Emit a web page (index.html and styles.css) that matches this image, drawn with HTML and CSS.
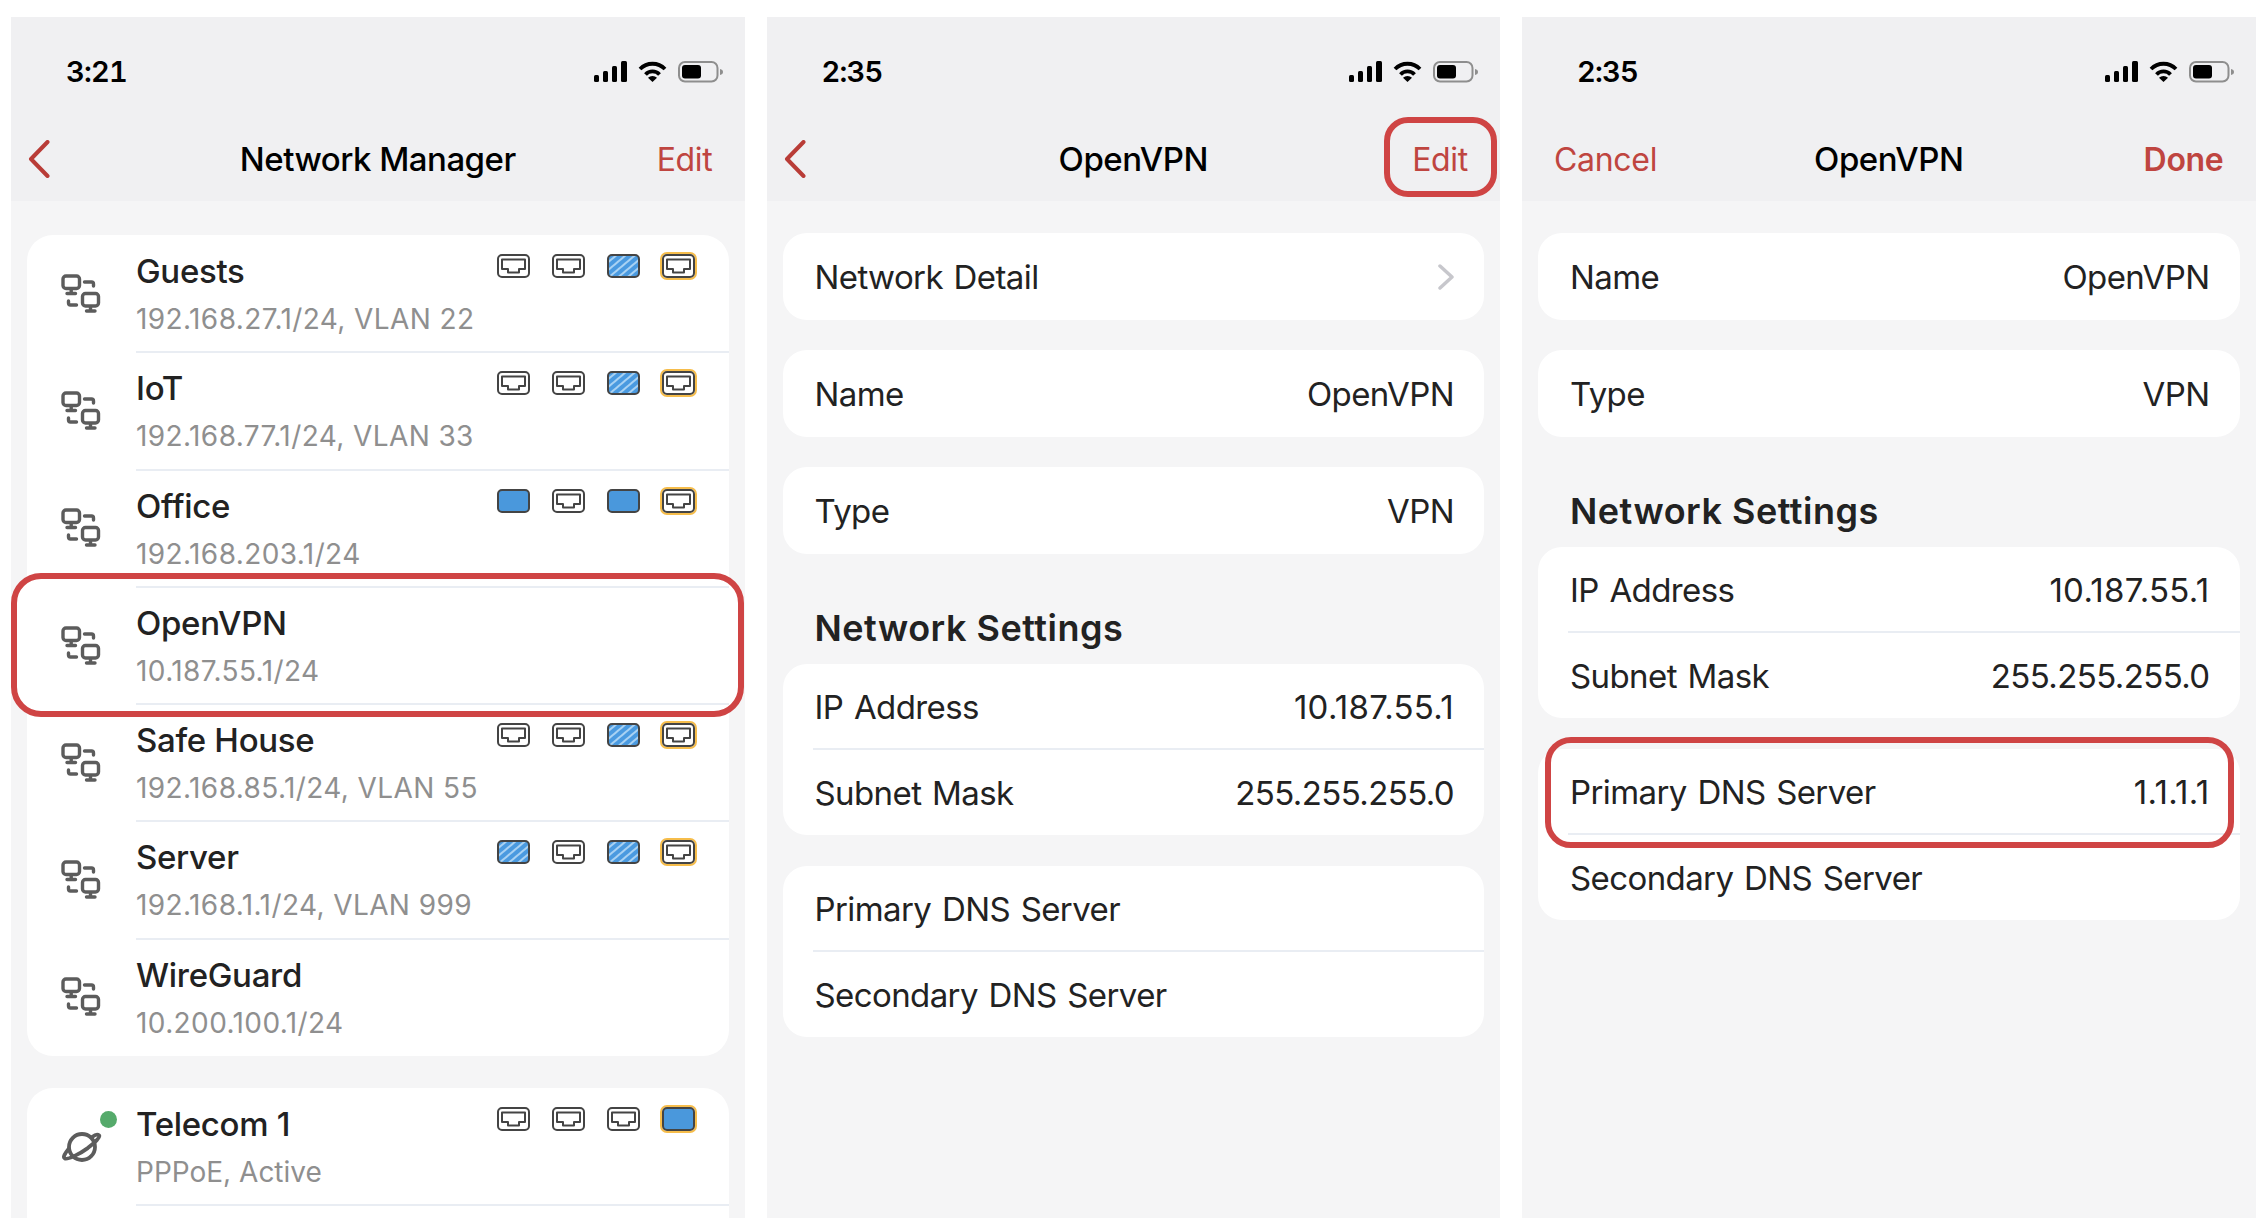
FILE: index.html
```html
<!DOCTYPE html>
<html lang="en">
<head>
<meta charset="utf-8">
<title>Network Manager</title>
<link rel="stylesheet" href="styles.css">
</head>
<body>
<svg class="defs" aria-hidden="true">
  <defs>
    <pattern id="hatch" width="6" height="6" patternUnits="userSpaceOnUse" patternTransform="rotate(-40)">
      <rect width="6" height="6" fill="#4a9ae0"/>
      <rect width="6" height="2" fill="#a9d2f3"/>
    </pattern>
    <g id="frame-plain">
      <rect x="1" y="1" width="31" height="22" rx="4" fill="#fff" stroke="#444" stroke-width="2"/>
      <path d="M5 5.5h23v9.5h-6v3.5h-11v-3.500h-6z" fill="#fff" stroke="#444" stroke-width="2" stroke-linejoin="round"/>
    </g>
    <g id="frame-hatch">
      <rect x="1" y="1" width="31" height="22" rx="4" fill="url(#hatch)" stroke="#444" stroke-width="2"/>
    </g>
    <g id="frame-solid">
      <rect x="1" y="1" width="31" height="22" rx="4" fill="#4a98dc" stroke="#444" stroke-width="2"/>
    </g>
    <rect id="ring" x="-1" y="-1" width="35" height="26" rx="6" fill="none" stroke="#f6bd4b" stroke-width="2"/>
    <g id="net" fill="none" stroke="#5c5c5c" stroke-width="3.400" stroke-linecap="round" stroke-linejoin="round">
      <rect x="2" y="2" width="16.500" height="12.500" rx="3"/>
      <path d="M10.200 15v4M6 19.500h8.500"/>
      <path d="M23.500 8h7q2 0 2 2v2"/>
      <path d="M7.500 27v2q0 2 2 2h6"/>
      <rect x="21.500" y="19.500" width="16" height="12.500" rx="3"/>
      <path d="M29.500 33v3.500M25.500 37h8.500"/>
    </g>
    <g id="planet" fill="none" stroke="#5c5c5c" stroke-width="3.800" stroke-linecap="round" stroke-linejoin="round">
      <circle cx="21" cy="16" r="13"/>
      <g transform="translate(21 16) rotate(-20)">
        <path d="M-13-3C-18 0-22 3-20 5C-18 7-5 6 5 3C14 0 21-3 20-5C19-7 16-7 13-6"/>
      </g>
    </g>
    <g id="signal" fill="#000">
      <rect x="0" y="14" width="5" height="7" rx="1.500"/>
      <rect x="9" y="10" width="5" height="11" rx="1.500"/>
      <rect x="18" y="5" width="5" height="16" rx="1.500"/>
      <rect x="27" y="0" width="6" height="21" rx="1.500"/>
    </g>
    <g id="wifi">
      <path d="M2 8A17.500 17.500 0 0 1 27 8M7.500 13.500A9.500 9.500 0 0 1 21.500 13.500" fill="none" stroke="#000" stroke-width="3.800"/>
      <path d="M14.500 21L10 16.800A6.500 6.500 0 0 1 19 16.800Z" fill="#000"/>
    </g>
    <g id="battery">
      <rect x="1" y="1" width="38.500" height="19.500" rx="6" fill="none" stroke="#8e8e8e" stroke-width="2"/>
      <rect x="4" y="4" width="19" height="13.500" rx="3" fill="#000"/>
      <path d="M42 8q3 .6 3 3t-3 3z" fill="#8e8e8e"/>
    </g>
  </defs>
</svg>

<main class="screens">

  <section class="phone">
    <div class="outline outline-row"></div>
    <header class="top">
      <div class="status">
        <span class="time">3:21</span>
        <div class="status-icons">
          <svg class="ic-signal"><use href="#signal"/></svg>
          <svg class="ic-wifi"><use href="#wifi"/></svg>
          <svg class="ic-battery"><use href="#battery"/></svg>
        </div>
      </div>
      <nav class="nav">
        <svg class="back" viewBox="0 0 22 38"><path d="M19.500 2L3 19l16.500 17"/></svg>
        <h1 class="title">Network Manager</h1>
        <a class="action">Edit</a>
      </nav>
    </header>

    <div class="list-card">
      <div class="net-row">
        <div class="net-icon"><svg class="ic-net"><use href="#net"/></svg></div>
        <div class="net-body">
          <div class="net-text"><div class="net-name">Guests</div><div class="net-sub">192.168.27.1/24, VLAN 22</div></div>
          <div class="ports">
            <svg class="port"><use href="#frame-plain"/></svg>
            <svg class="port"><use href="#frame-plain"/></svg>
            <svg class="port"><use href="#frame-hatch"/></svg>
            <svg class="port"><use href="#ring"/><use href="#frame-plain"/></svg>
          </div>
        </div>
      </div>
      <div class="net-row">
        <div class="net-icon"><svg class="ic-net"><use href="#net"/></svg></div>
        <div class="net-body">
          <div class="net-text"><div class="net-name">IoT</div><div class="net-sub">192.168.77.1/24, VLAN 33</div></div>
          <div class="ports">
            <svg class="port"><use href="#frame-plain"/></svg>
            <svg class="port"><use href="#frame-plain"/></svg>
            <svg class="port"><use href="#frame-hatch"/></svg>
            <svg class="port"><use href="#ring"/><use href="#frame-plain"/></svg>
          </div>
        </div>
      </div>
      <div class="net-row">
        <div class="net-icon"><svg class="ic-net"><use href="#net"/></svg></div>
        <div class="net-body">
          <div class="net-text"><div class="net-name">Office</div><div class="net-sub">192.168.203.1/24</div></div>
          <div class="ports">
            <svg class="port"><use href="#frame-solid"/></svg>
            <svg class="port"><use href="#frame-plain"/></svg>
            <svg class="port"><use href="#frame-solid"/></svg>
            <svg class="port"><use href="#ring"/><use href="#frame-plain"/></svg>
          </div>
        </div>
      </div>
      <div class="net-row">
        <div class="net-icon"><svg class="ic-net"><use href="#net"/></svg></div>
        <div class="net-body">
          <div class="net-text"><div class="net-name">OpenVPN</div><div class="net-sub">10.187.55.1/24</div></div>
        </div>
      </div>
      <div class="net-row">
        <div class="net-icon"><svg class="ic-net"><use href="#net"/></svg></div>
        <div class="net-body">
          <div class="net-text"><div class="net-name">Safe House</div><div class="net-sub">192.168.85.1/24, VLAN 55</div></div>
          <div class="ports">
            <svg class="port"><use href="#frame-plain"/></svg>
            <svg class="port"><use href="#frame-plain"/></svg>
            <svg class="port"><use href="#frame-hatch"/></svg>
            <svg class="port"><use href="#ring"/><use href="#frame-plain"/></svg>
          </div>
        </div>
      </div>
      <div class="net-row">
        <div class="net-icon"><svg class="ic-net"><use href="#net"/></svg></div>
        <div class="net-body">
          <div class="net-text"><div class="net-name">Server</div><div class="net-sub">192.168.1.1/24, VLAN 999</div></div>
          <div class="ports">
            <svg class="port"><use href="#frame-hatch"/></svg>
            <svg class="port"><use href="#frame-plain"/></svg>
            <svg class="port"><use href="#frame-hatch"/></svg>
            <svg class="port"><use href="#ring"/><use href="#frame-plain"/></svg>
          </div>
        </div>
      </div>
      <div class="net-row net-row-last">
        <div class="net-icon"><svg class="ic-net"><use href="#net"/></svg></div>
        <div class="net-body">
          <div class="net-text"><div class="net-name">WireGuard</div><div class="net-sub">10.200.100.1/24</div></div>
        </div>
      </div>
    </div>

    <div class="list-card list-card-open">
      <div class="net-row">
        <div class="net-icon">
          <span class="live-dot"></span>
          <svg class="ic-planet"><use href="#planet"/></svg>
        </div>
        <div class="net-body">
          <div class="net-text"><div class="net-name">Telecom 1</div><div class="net-sub net-sub-words">PPPoE, Active</div></div>
          <div class="ports">
            <svg class="port"><use href="#frame-plain"/></svg>
            <svg class="port"><use href="#frame-plain"/></svg>
            <svg class="port"><use href="#frame-plain"/></svg>
            <svg class="port"><use href="#ring"/><use href="#frame-solid"/></svg>
          </div>
        </div>
      </div>
    </div>
  </section>

  <section class="phone">
    <div class="outline outline-edit"></div>
    <header class="top">
      <div class="status">
        <span class="time">2:35</span>
        <div class="status-icons">
          <svg class="ic-signal"><use href="#signal"/></svg>
          <svg class="ic-wifi"><use href="#wifi"/></svg>
          <svg class="ic-battery"><use href="#battery"/></svg>
        </div>
      </div>
      <nav class="nav">
        <svg class="back" viewBox="0 0 22 38"><path d="M19.500 2L3 19l16.500 17"/></svg>
        <h1 class="title">OpenVPN</h1>
        <a class="action">Edit</a>
      </nav>
    </header>
    <div class="form">
      <div class="card"><div class="field"><span>Network Detail</span><svg class="disclosure" viewBox="0 0 16 26"><path d="M2 2l12 11L2 24"/></svg></div></div>
      <div class="card"><div class="field"><span>Name</span><span>OpenVPN</span></div></div>
      <div class="card"><div class="field"><span>Type</span><span>VPN</span></div></div>
      <h2 class="section-title">Network Settings</h2>
      <div class="card card-tight">
        <div class="field field-split"><span>IP Address</span><span class="addr">10.187.55.1</span></div>
        <div class="field field-end"><span>Subnet Mask</span><span>255.255.255.0</span></div>
      </div>
      <div class="card card-tight">
        <div class="field field-split"><span>Primary DNS Server</span></div>
        <div class="field field-end"><span>Secondary DNS Server</span></div>
      </div>
    </div>
  </section>

  <section class="phone">
    <div class="outline outline-dns"></div>
    <header class="top">
      <div class="status">
        <span class="time">2:35</span>
        <div class="status-icons">
          <svg class="ic-signal"><use href="#signal"/></svg>
          <svg class="ic-wifi"><use href="#wifi"/></svg>
          <svg class="ic-battery"><use href="#battery"/></svg>
        </div>
      </div>
      <nav class="nav">
        <a class="action action-start">Cancel</a>
        <h1 class="title">OpenVPN</h1>
        <a class="action action-strong">Done</a>
      </nav>
    </header>
    <div class="form">
      <div class="card"><div class="field"><span>Name</span><span>OpenVPN</span></div></div>
      <div class="card"><div class="field"><span>Type</span><span>VPN</span></div></div>
      <h2 class="section-title">Network Settings</h2>
      <div class="card card-tight">
        <div class="field field-split"><span>IP Address</span><span class="addr">10.187.55.1</span></div>
        <div class="field field-end"><span>Subnet Mask</span><span>255.255.255.0</span></div>
      </div>
      <div class="card card-tight">
        <div class="field field-split"><span>Primary DNS Server</span><span class="addr">1.1.1.1</span></div>
        <div class="field field-end"><span>Secondary DNS Server</span></div>
      </div>
    </div>
  </section>

</main>
</body>
</html>
```

FILE: styles.css
```css
* { box-sizing: border-box; }

html, body {
  margin: 0;
  height: 1218px;
  overflow: hidden;
  background: #fff;
}

body {
  font-family: Inter, "Liberation Sans", sans-serif;
  color: #222;
}

.defs { position: absolute; width: 0; height: 0; }

.screens {
  display: flex;
  gap: 22px;
  padding: 17px 0 0 11px;
}

.phone {
  position: relative;
  width: 733.5px;
  height: 1201px;
  background: #f5f5f6;
  overflow: hidden;
  flex: none;
}

/* header */
.top { background: #f0f0f2; height: 184px; }

.status {
  height: 109px;
  padding: 0 22px 0 55px;
  display: flex;
  align-items: center;
  justify-content: space-between;
}

.time {
  font-size: 29px;
  font-weight: 600;
  font-variant-numeric: tabular-nums;
  color: #000;
  letter-spacing: -0.8px;
}

.status-icons { display: flex; align-items: center; gap: 11px; }
.ic-signal { width: 33px; height: 21px; }
.ic-wifi { width: 29px; height: 21px; }
.ic-battery { width: 45px; height: 22px; }

.nav {
  height: 66px;
  padding: 0 32px;
  display: grid;
  grid-template-columns: 1fr auto 1fr;
  align-items: center;
}

.back {
  width: 22px;
  height: 38px;
  margin-left: -15px;
  fill: none;
  stroke: #b93c37;
  stroke-width: 4;
  stroke-linecap: round;
  stroke-linejoin: round;
}

.title {
  margin: 0;
  font-size: 33px;
  font-weight: 500;
  color: #000;
  letter-spacing: -0.5px;
}

.action {
  font-size: 32px;
  color: #bf4540;
  justify-self: end;
  letter-spacing: -0.3px;
}
.action-start { justify-self: start; }
.action-strong { font-weight: 600; }

/* network list */
.list-card {
  margin: 34px 16px 0;
  background: #fff;
  border-radius: 26px;
}
.list-card + .list-card { margin-top: 32px; }
.list-card-open { padding-bottom: 60px; }

.net-row {
  position: relative;
  z-index: 1;
  display: flex;
  height: 117.3px;
}

.net-icon {
  position: relative;
  flex: none;
  width: 109px;
  padding-left: 34px;
  display: flex;
  align-items: center;
}

.ic-net { width: 40px; height: 40px; }
.ic-planet { width: 44px; height: 34px; margin-top: 2px; }

.live-dot {
  position: absolute;
  left: 73px;
  top: 23px;
  width: 17px;
  height: 17px;
  border-radius: 50%;
  background: #55aa6b;
}

.net-body {
  flex: 1;
  display: flex;
  justify-content: space-between;
  margin-bottom: -1px;
  border-bottom: 2px solid #e9edf3;
}
.net-row-last .net-body { border-bottom: 0; }

.net-text { padding-top: 16px; white-space: nowrap; }

.net-name {
  font-size: 33px;
  font-weight: 500;
  line-height: 40px;
  color: #222;
  letter-spacing: -0.3px;
}

.net-sub {
  margin-top: 8px;
  font-size: 28px;
  line-height: 40px;
  color: #8f8f8f;
  letter-spacing: 0.4px;
}
.net-sub-words { letter-spacing: 0; }

.ports {
  display: flex;
  gap: 21.700px;
  padding: 19px 34px 0 0;
}

.port { width: 33px; height: 24px; overflow: visible; }

/* detail forms */
.form { padding: 32px 16px 0; }

.card {
  background: #fff;
  border-radius: 24px;
  margin-bottom: 30px;
}
.card-tight { margin-bottom: 31px; }

.field {
  height: 87px;
  margin-left: 30px;
  padding: 0 30px 0 2px;
  display: flex;
  align-items: center;
  justify-content: space-between;
  font-size: 33px;
  color: #222;
  letter-spacing: -0.6px;
  word-spacing: 2px;
}

.addr { letter-spacing: 0.3px; }

.field-split { height: 86px; padding-top: 1px; border-bottom: 2px solid #e9edf3; }
.field-end { height: 85px; }

.disclosure {
  width: 16px;
  height: 26px;
  fill: none;
  stroke: #c7c7cc;
  stroke-width: 3.5;
  stroke-linecap: round;
  stroke-linejoin: round;
}

.section-title {
  margin: 0;
  padding: 24px 0 16px 32px;
  font-size: 36px;
  line-height: 40px;
  font-weight: 600;
  color: #222;
  letter-spacing: 0.5px;
}

/* red call-outs */
.outline {
  position: absolute;
  border: 6px solid #cf4444;
}

.outline-row {
  left: 0;
  top: 556px;
  width: 733px;
  height: 144px;
  border-radius: 30px;
  background: #fff;
}

.outline-edit {
  z-index: 2;
  left: 617px;
  top: 100px;
  width: 113px;
  height: 80px;
  border-radius: 24px;
}

.outline-dns {
  z-index: 2;
  left: 23px;
  top: 720px;
  width: 689px;
  height: 111px;
  border-radius: 26px;
}
```
